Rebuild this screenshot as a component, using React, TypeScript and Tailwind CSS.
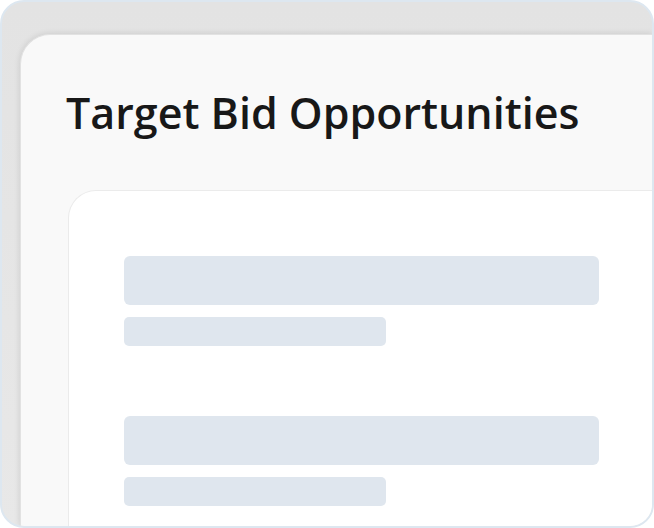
import React from "react";

export default function App() {
  return (
    <div className="w-[654px] h-[528px] bg-white">
      <div className="w-[654px] h-[528px] rounded-[24px] border-2 border-[#dde7f0] bg-gradient-to-b from-[#e3e3e3] to-[#e8e8e8] overflow-hidden flex flex-col pl-[18px] pt-[32px]">
        <div className="flex-1 flex flex-col rounded-tl-[30px] bg-[#f9f9f9] shadow-[0_0_6px_rgba(0,0,0,0.12)] border-t border-l border-[#e2e2e2]">
          <h1
            className="pl-[45px] pt-[56px] h-[155px] text-[43px] leading-none font-semibold text-[#181818] tracking-[0px]"
            style={{ fontFamily: '"Open Sans", "Noto Sans", sans-serif' }}
          >
            Target Bid Opportunities
          </h1>
          <div className="ml-[47px] flex-1 rounded-tl-[28px] bg-white border-t border-l border-[#ebebeb] pl-[55px] pt-[65px] flex flex-col">
            <div className="w-[475px] h-[49px] rounded-[6px] bg-[#dfe6ee]" />
            <div className="mt-[12px] w-[262px] h-[29px] rounded-[5px] bg-[#dfe6ee]" />
            <div className="mt-[70px] w-[475px] h-[49px] rounded-[6px] bg-[#dfe6ee]" />
            <div className="mt-[12px] w-[262px] h-[29px] rounded-[5px] bg-[#dfe6ee]" />
          </div>
        </div>
      </div>
    </div>
  );
}
